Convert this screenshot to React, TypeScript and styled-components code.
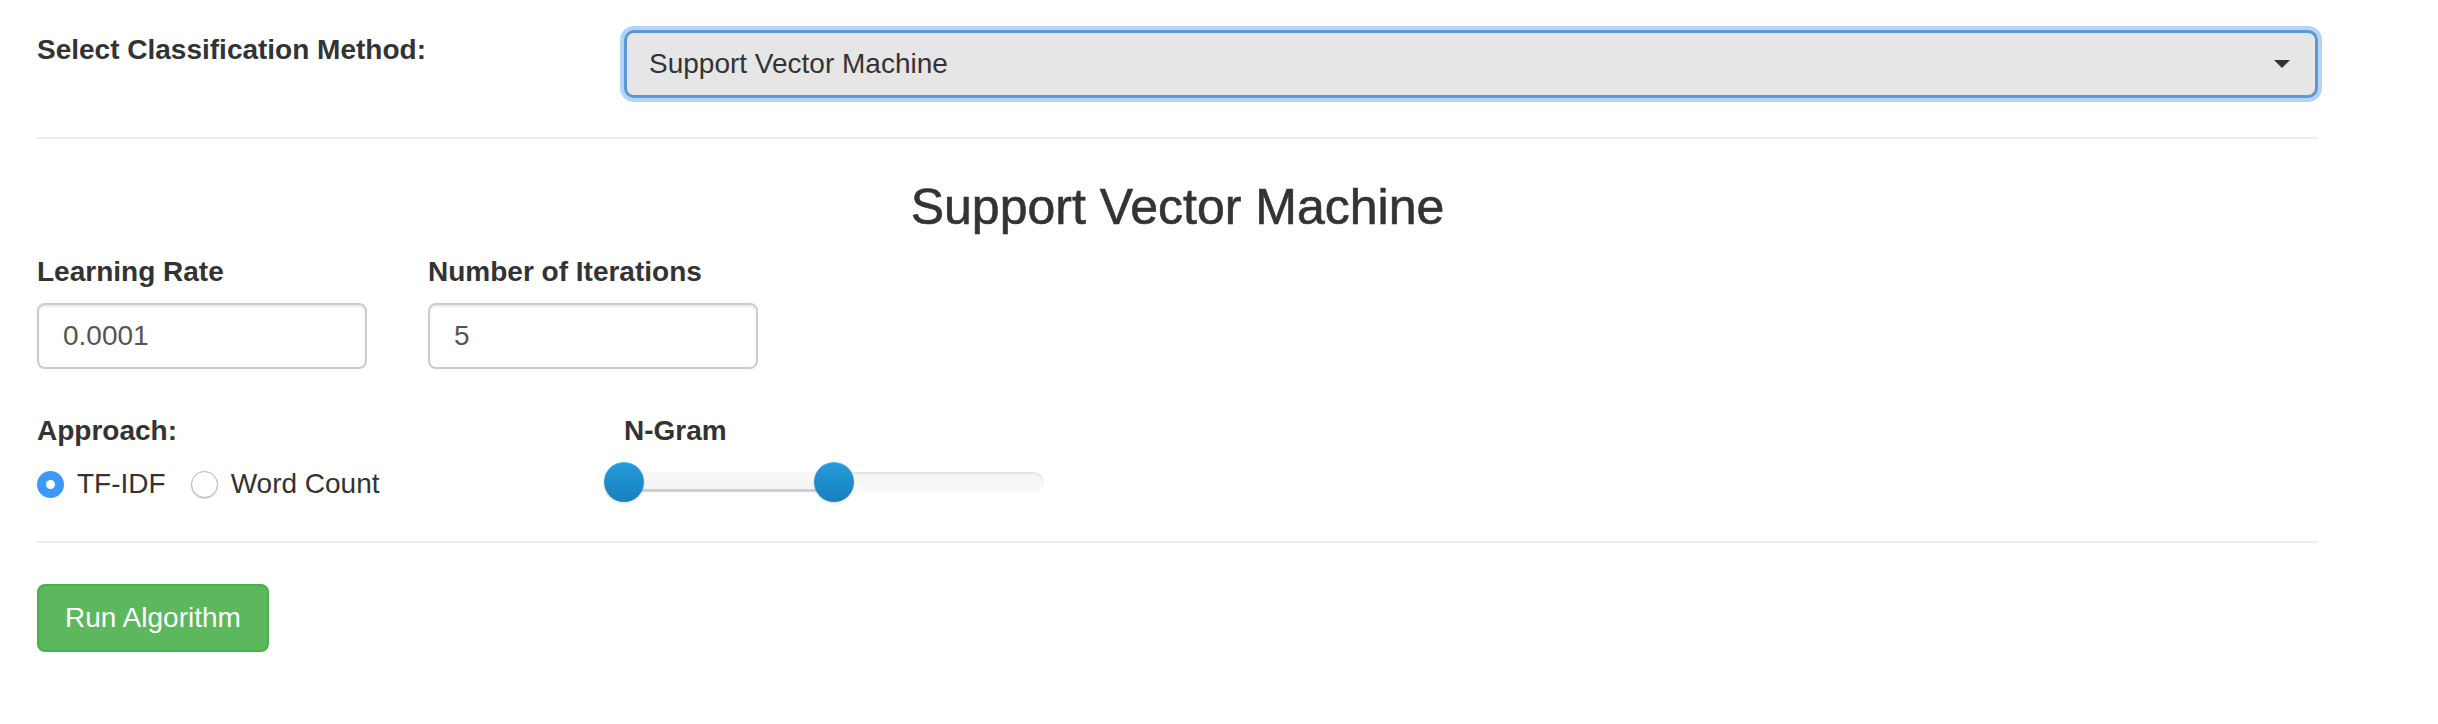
import { FunctionComponent } from "react";
import styled, { createGlobalStyle } from "styled-components";

const GlobalStyle = createGlobalStyle`
  body {
    margin: 0;
    background: #fff;
    color: #333;
    font-family: "Liberation Sans", Arial, Helvetica, sans-serif;
    font-size: 28px;
    line-height: 40px;
  }
`;

const ngram = { min: 1, max: 3, values: [1, 2] };

const RangeSlider: FunctionComponent<{
  min: number;
  max: number;
  values: number[];
}> = ({ min, max, values }) => {
  const pct = (v: number) => ((v - min) / (max - min)) * 100;
  const [lo, hi] = values.map(pct);
  return (
    <SliderTrack>
      <SliderSelection style={{ left: `${lo}%`, width: `${hi - lo}%` }} />
      <SliderHandle style={{ left: `${lo}%` }} />
      <SliderHandle style={{ left: `${hi}%` }} />
    </SliderTrack>
  );
};

const App: FunctionComponent = () => {
  return (
    <Page>
      <GlobalStyle />
      <TopRow>
        <FieldLabel>Select Classification Method:</FieldLabel>
        <SelectBox>
          <span>Support Vector Machine</span>
          <Caret />
        </SelectBox>
      </TopRow>
      <Divider $top={39} />
      <Heading>Support Vector Machine</Heading>
      <ParamsRow>
        <Field>
          <FieldLabel>Learning Rate</FieldLabel>
          <TextInput>0.0001</TextInput>
        </Field>
        <Field>
          <FieldLabel>Number of Iterations</FieldLabel>
          <TextInput>5</TextInput>
        </Field>
      </ParamsRow>
      <OptionsRow>
        <Field>
          <FieldLabel>Approach:</FieldLabel>
          <RadioGroup>
            <RadioOption>
              <Radio $checked />
              TF-IDF
            </RadioOption>
            <RadioOption>
              <Radio />
              Word Count
            </RadioOption>
          </RadioGroup>
        </Field>
        <Field>
          <FieldLabel>N-Gram</FieldLabel>
          <SliderWrap>
            <RangeSlider {...ngram} />
          </SliderWrap>
        </Field>
      </OptionsRow>
      <Divider $top={37} />
      <RunButton>Run Algorithm</RunButton>
    </Page>
  );
};

export default App;

const Page = styled.div`
  width: 2281px;
  padding: 30px 0 0 37px;
`;

const TopRow = styled.div`
  display: grid;
  grid-template-columns: 587px 1694px;
  align-items: start;
`;

const FieldLabel = styled.div`
  font-weight: bold;
  line-height: 40px;
`;

const SelectBox = styled.div`
  box-sizing: border-box;
  height: 68px;
  display: flex;
  align-items: center;
  justify-content: space-between;
  padding: 0 25px 0 22px;
  background: #e6e6e6;
  border: 3px solid #5e97d8;
  border-radius: 10px;
  box-shadow: 0 0 0 4px #b3d4f6;
  color: #333;
`;

const Caret = styled.div`
  width: 0;
  height: 0;
  border-left: 8px solid transparent;
  border-right: 8px solid transparent;
  border-top: 8px solid #333;
`;

const Divider = styled.hr<{ $top: number }>`
  margin: ${(p) => p.$top}px 0 0;
  border: 0;
  border-top: 2px solid #eee;
  height: 0;
`;

const Heading = styled.h3`
  margin: 41px 0 0;
  text-align: center;
  font-size: 50px;
  line-height: 55px;
  font-weight: normal;
  color: #333;
  -webkit-text-stroke: 0.6px #333;
`;

const ParamsRow = styled.div`
  display: grid;
  grid-template-columns: 391px 391px;
  margin-top: 17px;
`;

const Field = styled.div`
  display: flex;
  flex-direction: column;
`;

const TextInput = styled.div`
  box-sizing: border-box;
  width: 330px;
  height: 66px;
  margin-top: 11px;
  padding: 0 24px;
  display: flex;
  align-items: center;
  border: 2px solid #ccc;
  border-radius: 8px;
  box-shadow: inset 0 2px 2px rgba(0, 0, 0, 0.075);
  color: #555;
`;

const OptionsRow = styled.div`
  display: grid;
  grid-template-columns: 587px 420px;
  margin-top: 42px;
`;

const RadioGroup = styled.div`
  display: flex;
  gap: 25px;
  margin-top: 13px;
`;

const RadioOption = styled.label`
  display: flex;
  align-items: center;
  gap: 13px;
`;

const Radio = styled.span<{ $checked?: boolean }>`
  box-sizing: border-box;
  width: 27px;
  height: 27px;
  border-radius: 50%;
  position: relative;
  background: ${(p) => (p.$checked ? "#3b99fc" : "#fff")};
  border: ${(p) => (p.$checked ? "none" : "1px solid #b3b3b3")};
  box-shadow: ${(p) =>
    p.$checked ? "none" : "0 1px 1px rgba(0, 0, 0, 0.15)"};
  &::after {
    content: "";
    display: ${(p) => (p.$checked ? "block" : "none")};
    position: absolute;
    left: 50%;
    top: 50%;
    width: 9px;
    height: 9px;
    margin: -4.5px 0 0 -4.5px;
    border-radius: 50%;
    background: #fff;
  }
`;

const SliderWrap = styled.div`
  height: 40px;
  margin-top: 13px;
  display: flex;
  align-items: center;
`;

const SliderTrack = styled.div`
  position: relative;
  width: 420px;
  height: 20px;
  margin-top: -4px;
  border-radius: 10px;
  background: linear-gradient(#f5f5f5, #f9f9f9);
  box-shadow: inset 0 2px 3px rgba(0, 0, 0, 0.08);
`;

const SliderSelection = styled.div`
  position: absolute;
  top: 0;
  bottom: 0;
  background: linear-gradient(#f9f9f9, #f3f3f3);
  box-shadow: inset 0 -3px 0 rgba(0, 0, 0, 0.15);
`;

const SliderHandle = styled.div`
  position: absolute;
  top: 50%;
  width: 40px;
  height: 40px;
  margin: -20px 0 0 -20px;
  border-radius: 50%;
  background: linear-gradient(#249cdb, #1a7fbd);
  box-shadow: inset 0 1px 0 rgba(255, 255, 255, 0.2),
    0 2px 3px rgba(0, 0, 0, 0.1);
`;

const RunButton = styled.button`
  margin-top: 41px;
  height: 68px;
  padding: 0 26px;
  background: #5cb85c;
  border: 2px solid #4cae4c;
  border-radius: 8px;
  color: #fff;
  font-family: inherit;
  font-size: 28px;
  line-height: 40px;
  cursor: pointer;
`;
